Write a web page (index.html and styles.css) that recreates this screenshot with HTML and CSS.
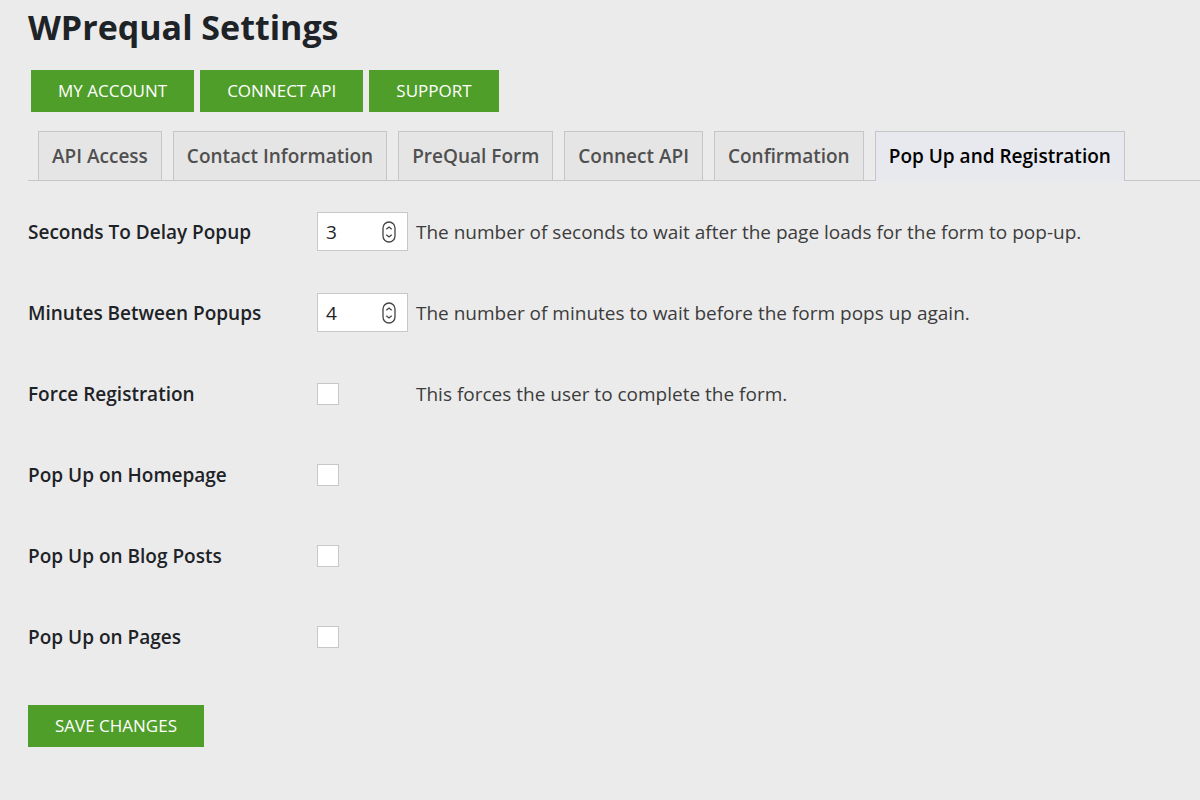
FILE: index.html
```html
<!DOCTYPE html>
<html lang="en">
<head>
<meta charset="utf-8">
<title>WPrequal Settings</title>
<link rel="stylesheet" href="styles.css">
</head>
<body>
<main class="settings">
  <h1 class="title">WPrequal Settings</h1>
  <div class="actions">
    <a class="button" href="#account">MY ACCOUNT</a>
    <a class="button" href="#connect">CONNECT API</a>
    <a class="button" href="#support">SUPPORT</a>
  </div>
  <nav class="tabs">
    <a class="tab" href="#api-access">API Access</a>
    <a class="tab" href="#contact">Contact Information</a>
    <a class="tab" href="#form">PreQual Form</a>
    <a class="tab" href="#connect-api">Connect API</a>
    <a class="tab" href="#confirmation">Confirmation</a>
    <a class="tab tab-active" href="#popup" aria-current="page">Pop Up and Registration</a>
  </nav>
  <form class="form">
    <div class="row">
      <label class="label" for="delay">Seconds To Delay Popup</label>
      <span class="number">
        <input class="number-input" id="delay" type="number" value="3">
        <svg class="stepper" viewBox="0 0 14 22" aria-hidden="true"><rect x="1" y="1" width="12" height="20" rx="6"/><path d="M4.3 8.3 7 6l2.7 2.3M4.3 13.7 7 16l2.7-2.3"/></svg>
      </span>
      <span class="description">The number of seconds to wait after the page loads for the form to pop-up.</span>
    </div>
    <div class="row">
      <label class="label" for="between">Minutes Between Popups</label>
      <span class="number">
        <input class="number-input" id="between" type="number" value="4">
        <svg class="stepper" viewBox="0 0 14 22" aria-hidden="true"><rect x="1" y="1" width="12" height="20" rx="6"/><path d="M4.3 8.3 7 6l2.7 2.3M4.3 13.7 7 16l2.7-2.3"/></svg>
      </span>
      <span class="description">The number of minutes to wait before the form pops up again.</span>
    </div>
    <div class="row">
      <label class="label" for="force">Force Registration</label>
      <input class="checkbox" id="force" type="checkbox">
      <span class="description">This forces the user to complete the form.</span>
    </div>
    <div class="row">
      <label class="label" for="home">Pop Up on Homepage</label>
      <input class="checkbox" id="home" type="checkbox">
    </div>
    <div class="row">
      <label class="label" for="posts">Pop Up on Blog Posts</label>
      <input class="checkbox" id="posts" type="checkbox">
    </div>
    <div class="row">
      <label class="label" for="pages">Pop Up on Pages</label>
      <input class="checkbox" id="pages" type="checkbox">
    </div>
    <button class="button save" type="submit">SAVE CHANGES</button>
  </form>
</main>
</body>
</html>
```
FILE: styles.css
```css
* { box-sizing: border-box; }

body {
  margin: 0;
  background: #ebebeb;
  color: #1d2327;
  font-family: "Open Sans", sans-serif;
  font-size: 19px;
  line-height: 26px;
}

.settings { padding: 3px 0 48px 28px; }

.title {
  margin: 0;
  font-size: 34px;
  font-weight: 700;
  line-height: 48px;
}

.actions {
  display: flex;
  gap: 6px;
  padding: 19px 0 19px 3px;
}

.button {
  padding: 8px 27px 9px;
  border: 0;
  background: #509e2a;
  color: #fff;
  font-family: inherit;
  font-size: 17px;
  font-weight: 400;
  line-height: 25px;
  text-align: center;
  text-decoration: none;
}

.tabs {
  display: flex;
  gap: 11px;
  padding-left: 10px;
  border-bottom: 1px solid #c5c6c8;
}

.tab {
  padding: 11px 13px;
  border: 1px solid #c5c6c8;
  border-bottom: 0;
  background: #e5e5e5;
  color: #505050;
  font-weight: 600;
  text-decoration: none;
  white-space: nowrap;
}

.tab-active {
  margin-bottom: -1px;
  background: #e8e9ee;
  color: #000;
}

.form { padding-top: 10px; }

.row {
  display: grid;
  grid-template-columns: 281px 91px 1fr;
  column-gap: 8px;
  align-items: center;
  min-height: 81px;
}

.label { font-weight: 600; }

.description { color: #3c3c3c; }

.number { position: relative; }

.number-input {
  display: block;
  width: 100%;
  height: 39px;
  padding: 0 8px;
  border: 1px solid #c8c8c8;
  border-radius: 0;
  background: #fff;
  color: #1d2327;
  font-family: inherit;
  font-size: 19px;
  appearance: textfield;
}

.stepper {
  position: absolute;
  top: 9px;
  right: 12px;
  width: 14px;
  height: 22px;
  fill: none;
  stroke: #444;
  stroke-width: 1.3;
  pointer-events: none;
}

.checkbox {
  appearance: none;
  width: 22px;
  height: 22px;
  margin: 0;
  border: 1px solid #c8c8c8;
  background: #fff;
}

.save { margin-top: 28px; }
```
